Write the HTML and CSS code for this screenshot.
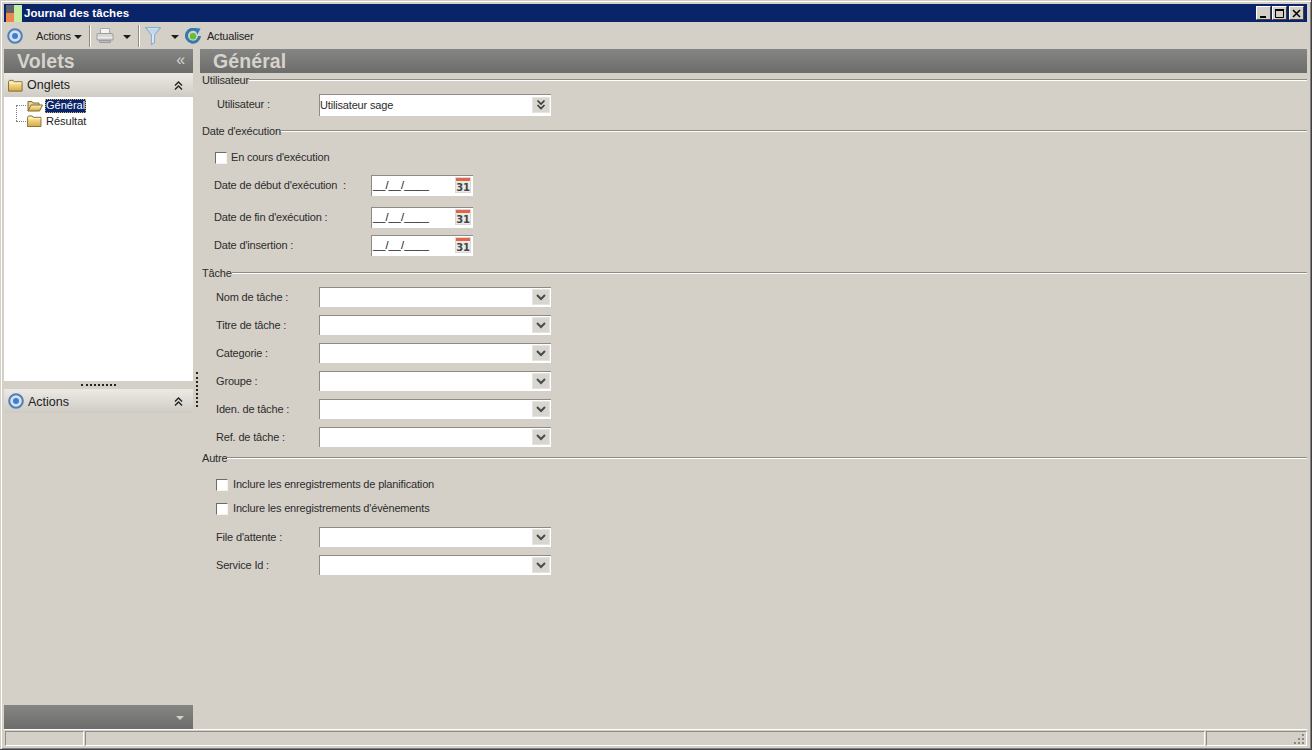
FILE: index.html
```html
<!DOCTYPE html>
<html lang="fr">
<head>
<meta charset="utf-8">
<title>Journal des tâches</title>
<link rel="stylesheet" href="styles.css">
</head>
<body>
<svg class="defs" width="0" height="0" aria-hidden="true">
  <defs>
    <linearGradient id="fold" x1="0" y1="0" x2="0" y2="1"><stop offset="0" stop-color="#fff3b8"/><stop offset="1" stop-color="#d9a83c"/></linearGradient>
    <symbol id="folder" viewBox="0 0 16 13">
      <path d="M.5 2.500 1.500 1h4l1 1.500h8.500v10H.5z" fill="url(#fold)" stroke="#7d6a38"/>
      <path d="M1.500 4h13" stroke="#fff6c8"/>
    </symbol>
    <symbol id="folder-open" viewBox="0 0 16 12">
      <path d="M1 11V1.500h4l1 1.500h6v2" fill="#e8d590" stroke="#7d6a38"/>
      <path d="M1 11 4 5h11.500l-3 6z" fill="url(#fold)" stroke="#7d6a38"/>
    </symbol>
    <symbol id="target" viewBox="0 0 16 16">
      <circle cx="8" cy="8" r="6.800" fill="#d5e0ee" stroke="#4f7fb8" stroke-width="2"/>
      <circle cx="8" cy="8" r="3" fill="#3f7fd0"/>
    </symbol>
    <symbol id="cal" viewBox="0 0 16 16">
      <rect width="16" height="16" fill="#d9d8d4"/>
      <rect x="1" y="1" width="14" height="3" fill="#e2654a"/>
      <rect x="1" y="4" width="14" height="11" fill="#ece9e2"/>
      <text x="8" y="13.500" text-anchor="middle" class="cal-num">31</text>
    </symbol>
    <symbol id="chev" viewBox="0 0 18 16">
      <rect width="18" height="16" fill="#d8d6d0"/>
      <rect x=".5" y=".5" width="17" height="15" fill="none" stroke="#e6e4df"/>
      <path d="M5 6l4 4 4-4" fill="none" stroke="#4a4a4a" stroke-width="2"/>
    </symbol>
    <symbol id="chev2" viewBox="0 0 18 16">
      <rect width="18" height="16" fill="#d8d6d0"/>
      <rect x=".5" y=".5" width="17" height="15" fill="none" stroke="#e6e4df"/>
      <path d="M5.500 3.500l3.500 3.500 3.500-3.500M5.500 8l3.500 3.500L12.500 8" fill="none" stroke="#3a3a3a" stroke-width="1.600"/>
    </symbol>
    <symbol id="up2" viewBox="0 0 9 9">
      <path d="M1 4.500 4.500 1 8 4.500M1 8.500 4.500 5 8 8.500" fill="none" stroke="#222" stroke-width="1.400"/>
    </symbol>
  </defs>
</svg>

<div class="window">
  <header class="titlebar">
    <svg class="app-icon" width="16" height="17" viewBox="0 0 16 17">
      <rect width="8" height="8" fill="#5d636b"/>
      <rect y="8" width="8" height="9" fill="#f0864c"/>
      <rect x="8" width="8" height="17" fill="#c6eea2"/>
    </svg>
    <span class="title-text">Journal des tâches</span>
    <div class="win-btns">
      <button class="win-btn"><svg width="9" height="9" viewBox="0 0 9 9"><rect x="1" y="7" width="6" height="2" fill="#000"/></svg></button>
      <button class="win-btn"><svg width="9" height="9" viewBox="0 0 9 9"><path d="M.5 1.500h8v7h-8z" fill="none" stroke="#000"/><path d="M0 1h9" stroke="#000" stroke-width="2"/></svg></button>
      <button class="win-btn win-close"><svg width="9" height="9" viewBox="0 0 9 9"><path d="M1 1l7 7M8 1 1 8" stroke="#000" stroke-width="1.600"/></svg></button>
    </div>
  </header>

  <nav class="toolbar">
    <svg class="tb-target" width="16" height="16"><use href="#target"/></svg>
    <span class="tb-actions">Actions</span>
    <i class="caret caret-actions"></i>
    <i class="tb-sep"></i>
    <svg class="tb-printer" width="18" height="17" viewBox="0 0 18 17">
      <path d="M4.500 1.500h9v5h-9z" fill="#f4f4f2" stroke="#a8a8a8"/>
      <path d="M1 7.500q0-1 1-1h14q1 0 1 1v5.500H1z" fill="#d8d8d6" stroke="#9c9c9c"/>
      <path d="M1.500 10.500h15" stroke="#efefed"/>
      <path d="M3.500 13.500h11v2h-11z" fill="#bcbcba" stroke="#9c9c9c"/>
    </svg>
    <i class="caret caret-print"></i>
    <i class="tb-sep tb-sep2"></i>
    <svg class="tb-filter" width="16" height="18" viewBox="0 0 16 18">
      <path d="M.7.700h14.600L9.500 8v7.500l-3 2V8z" fill="#e6eef4" stroke="#86b0d2" stroke-width="1.200"/>
      <path d="M3 2h10L8.500 7.500h-1z" fill="#c4d8e8"/>
    </svg>
    <i class="caret caret-filter"></i>
    <svg class="tb-refresh" width="16" height="16" viewBox="0 0 16 16">
      <path d="M11.500 2.200A6.500 6.500 0 1 0 14.500 8" fill="none" stroke="#3a78a8" stroke-width="3"/>
      <path d="M9 0 15.500 .5 12.500 6.500z" fill="#2f7fc0"/>
      <circle cx="8" cy="8.200" r="3.200" fill="#5fc03c"/>
    </svg>
    <span class="tb-refresh-label">Actualiser</span>
  </nav>

  <div class="main">
    <aside class="sidebar">
      <div class="dark-head">
        <span class="dark-title">Volets</span>
        <span class="collapse">«</span>
      </div>
      <div class="pane-head">
        <svg class="pane-folder" width="15" height="13"><use href="#folder"/></svg>
        <span class="pane-label">Onglets</span>
        <svg class="pane-up" width="9" height="9"><use href="#up2"/></svg>
      </div>
      <ul class="tree">
        <li class="tree-item tree-first">
          <svg class="tree-icon" width="16" height="12"><use href="#folder-open"/></svg>
          <span class="tree-sel">Général</span>
        </li>
        <li class="tree-item tree-second">
          <svg class="tree-icon tree-icon-closed" width="15" height="12"><use href="#folder"/></svg>
          <span class="tree-text">Résultat</span>
        </li>
      </ul>
      <div class="grip"><i class="grip-dots"></i></div>
      <div class="pane-head">
        <svg class="pane-target" width="16" height="16"><use href="#target"/></svg>
        <span class="pane-label pane-label-low">Actions</span>
        <svg class="pane-up" width="9" height="9"><use href="#up2"/></svg>
      </div>
      <div class="side-fill"></div>
      <div class="dark-foot"><i class="foot-arrow"></i></div>
    </aside>

    <div class="splitter"><i class="split-dots"></i></div>

    <main class="content">
      <div class="dark-head dark-head-main"><span class="dark-title">Général</span></div>
      <form class="form">
        <div class="group-title"><span>Utilisateur</span><i class="rule"></i></div>
        <div class="row row-user">
          <label class="lbl lbl-user">Utilisateur :</label>
          <div class="combo combo-tall"><span class="combo-value">Utilisateur sage</span><svg class="combo-btn" width="18" height="16"><use href="#chev2"/></svg></div>
        </div>

        <div class="group-title gt-date"><span>Date d'exécution</span><i class="rule"></i></div>
        <div class="check-row cr-run"><input type="checkbox" class="check"><span>En cours d'exécution</span></div>
        <div class="row row-date rd-start">
          <label class="lbl lbl-date">Date de début d'exécution&nbsp; :</label>
          <div class="date"><span class="mask">__/__/____</span><svg class="cal" width="16" height="16"><use href="#cal"/></svg></div>
        </div>
        <div class="row row-date rd-end">
          <label class="lbl lbl-date">Date de fin d'exécution :</label>
          <div class="date"><span class="mask">__/__/____</span><svg class="cal" width="16" height="16"><use href="#cal"/></svg></div>
        </div>
        <div class="row row-date rd-ins">
          <label class="lbl lbl-date">Date d'insertion :</label>
          <div class="date"><span class="mask">__/__/____</span><svg class="cal" width="16" height="16"><use href="#cal"/></svg></div>
        </div>

        <div class="group-title gt-task"><span>Tâche</span><i class="rule"></i></div>
        <div class="rows rows-task">
          <div class="row"><label class="lbl">Nom de tâche :</label><div class="combo"><svg class="combo-btn" width="18" height="16"><use href="#chev"/></svg></div></div>
          <div class="row"><label class="lbl">Titre de tâche :</label><div class="combo"><svg class="combo-btn" width="18" height="16"><use href="#chev"/></svg></div></div>
          <div class="row"><label class="lbl">Categorie :</label><div class="combo"><svg class="combo-btn" width="18" height="16"><use href="#chev"/></svg></div></div>
          <div class="row"><label class="lbl">Groupe :</label><div class="combo"><svg class="combo-btn" width="18" height="16"><use href="#chev"/></svg></div></div>
          <div class="row"><label class="lbl">Iden. de tâche :</label><div class="combo"><svg class="combo-btn" width="18" height="16"><use href="#chev"/></svg></div></div>
          <div class="row"><label class="lbl">Ref. de tâche :</label><div class="combo"><svg class="combo-btn" width="18" height="16"><use href="#chev"/></svg></div></div>
        </div>

        <div class="group-title gt-other"><span>Autre</span><i class="rule"></i></div>
        <div class="check-row cr-plan"><input type="checkbox" class="check"><span>Inclure les enregistrements de planification</span></div>
        <div class="check-row cr-evt"><input type="checkbox" class="check"><span>Inclure les enregistrements d'évènements</span></div>
        <div class="rows rows-other">
          <div class="row"><label class="lbl">File d'attente :</label><div class="combo"><svg class="combo-btn" width="18" height="16"><use href="#chev"/></svg></div></div>
          <div class="row"><label class="lbl">Service Id :</label><div class="combo"><svg class="combo-btn" width="18" height="16"><use href="#chev"/></svg></div></div>
        </div>
      </form>
    </main>
  </div>

  <footer class="statusbar">
    <div class="status-cell s1"></div>
    <div class="status-cell s2"></div>
    <div class="status-cell s3"><svg class="sizer" width="12" height="12" viewBox="0 0 12 12"><path d="M9 1h2v2H9zM9 5h2v2H9zM5 5h2v2H5zM9 9h2v2H9zM5 9h2v2H5zM1 9h2v2H1z" fill="#8a8780"/></svg></div>
  </footer>
</div>
</body>
</html>
```
FILE: styles.css
```css
* { box-sizing: border-box; }
html, body { margin: 0; height: 100%; }
body {
  background: #d4d0c8;
  font-family: "Liberation Sans", Arial, sans-serif;
  font-size: 11px;
  letter-spacing: -.17px;
  color: #222;
  overflow: hidden;
}
.defs { position: absolute; }
.cal-num { font: bold 10px "DejaVu Sans", sans-serif; fill: #3c4650; letter-spacing: -.3px; }

.window {
  width: 1312px;
  height: 750px;
  display: flex;
  flex-direction: column;
  padding: 4px 4px 3px 4px;
  background: #d4d0c8;
  border-right: 1px solid #404040;
  border-bottom: 1px solid #404040;
  box-shadow: inset 1px 1px 0 #d4d0c8, inset 2px 2px 0 #fff, inset -1px -1px 0 #808080;
}

/* title bar */
.titlebar {
  height: 18px;
  flex: none;
  background: #0a246a;
  display: flex;
  align-items: center;
  color: #fff;
  padding-left: 2px;
}
.app-icon { flex: none; margin-top: 1px; }
.title-text { font-weight: bold; font-size: 11.500px; margin-left: 2px; letter-spacing: .05px; }
.win-btns { margin-left: auto; margin-right: 3px; display: flex; }
.win-btn {
  width: 15px;
  height: 14px;
  padding: 0;
  margin-left: 1px;
  background: #d4d0c8;
  border: 1px solid;
  border-color: #fff #404040 #404040 #fff;
  display: flex;
  align-items: center;
  justify-content: center;
}
.win-close { margin-left: 2px; }

/* toolbar */
.toolbar {
  height: 27px;
  flex: none;
  display: flex;
  align-items: center;
}
.tb-target { margin-left: 3px; flex: none; }
.tb-actions { margin-left: 13px; }
.caret {
  flex: none;
  width: 0;
  height: 0;
  border-left: 4px solid transparent;
  border-right: 4px solid transparent;
  border-top: 4px solid #1c1c1c;
  margin-top: 2px;
}
.caret-actions { margin-left: 3px; }
.tb-sep {
  flex: none;
  width: 2px;
  height: 22px;
  border-left: 1px solid #8f8c85;
  border-right: 1px solid #fff;
  margin-left: 7px;
}
.tb-printer { margin-left: 5px; flex: none; }
.caret-print { margin-left: 9px; }
.tb-sep2 { margin-left: 7px; }
.tb-filter { margin-left: 5px; flex: none; }
.caret-filter { margin-left: 10px; }
.tb-refresh { margin-left: 6px; flex: none; }
.tb-refresh-label { margin-left: 6px; }

/* layout */
.main { flex: 1; min-height: 0; display: flex; }
.sidebar { width: 189px; flex: none; display: flex; flex-direction: column; }
.splitter { width: 7px; flex: none; position: relative; }
.split-dots {
  position: absolute;
  left: 3px;
  top: 323px;
  height: 35px;
  width: 2px;
  border-left: 2px dotted #222;
}
.content { flex: 1; min-width: 0; display: flex; flex-direction: column; }

/* headers */
.dark-head {
  height: 24px;
  flex: none;
  background: linear-gradient(#858583, #6c6c6a);
  display: flex;
  align-items: center;
  padding-left: 13px;
  color: #d6d3cd;
}
.dark-title { font-weight: bold; font-size: 19.500px; letter-spacing: .1px; }
.collapse { margin-left: auto; margin-right: 8px; font-size: 16px; line-height: 16px; margin-top: -2px; }
.pane-head {
  height: 24px;
  flex: none;
  background: linear-gradient(#edeae5, #cfcbc4);
  display: flex;
  align-items: center;
  font-size: 12.500px;
  letter-spacing: 0;
}
.pane-folder { margin-left: 4px; flex: none; }
.pane-target { margin-left: 4px; flex: none; }
.pane-label { margin-left: 4px; }
.pane-label-low { padding-top: 2px; }
.pane-up { margin-left: auto; margin-right: 10px; flex: none; }

/* tree */
.tree {
  list-style: none;
  margin: 0;
  padding: 0 0 0 23px;
  height: 284px;
  flex: none;
  background: #fff;
}
.tree-item { position: relative; display: flex; align-items: center; height: 16px; letter-spacing: 0; }
.tree-first { height: 16px; padding-top: 1px; }
.tree-item::before {
  content: "";
  position: absolute;
  left: -11px;
  top: 8px;
  width: 10px;
  border-top: 1px dotted #808080;
}
.tree-second::after {
  content: "";
  position: absolute;
  left: -11px;
  top: -8px;
  height: 16px;
  border-left: 1px dotted #808080;
}
.tree-icon { flex: none; }
.tree-sel {
  background: #0a246a;
  color: #fff;
  margin-left: 2px;
  padding: 0 1px;
  height: 14px;
  line-height: 13px;
  outline: 1px dotted #c8b070;
  outline-offset: -1px;
}
.tree-text { margin-left: 4px; }
.tree-icon-closed { margin-left: 0; }

.grip { height: 8px; flex: none; display: flex; justify-content: center; align-items: center; padding-right: 1px; }
.grip-dots { width: 35px; height: 2px; border-top: 2px dotted #222; }
.side-fill { flex: 1; }
.dark-foot {
  height: 24px;
  flex: none;
  background: linear-gradient(#858583, #6c6c6a);
  display: flex;
  align-items: center;
  justify-content: flex-end;
  padding-right: 9px;
}
.foot-arrow {
  width: 0;
  height: 0;
  border-left: 4px solid transparent;
  border-right: 4px solid transparent;
  border-top: 4px solid #d4d0c8;
  margin-top: 2px;
}

/* form */
.form { padding-left: 2px; display: flex; flex-direction: column; color: #2c2c2c; }
.group-title { height: 14px; display: flex; align-items: center; line-height: 14px; flex: none; }
.group-title > span { flex: none; }
.rule { flex: 1; height: 2px; border-top: 1px solid #8f8c85; border-bottom: 1px solid #fff; margin-top: -1px; }
.gt-date { margin-top: 8px; }
.gt-task { margin-top: 10px; }
.gt-other { margin-top: 4px; }

.row { display: flex; align-items: center; padding-left: 14px; }
.lbl { width: 103px; flex: none; }
.row-user { margin-top: 7px; padding-left: 15px; }
.lbl-user { width: 102px; padding-bottom: 2px; }
.row-date { padding-left: 12px; }
.lbl-date { width: 157px; padding-bottom: 2px; }
.rd-start { margin-top: 11px; }
.rd-end { margin-top: 11px; }
.rd-ins { margin-top: 7px; }

.rows { display: flex; flex-direction: column; gap: 8px; }
.rows-task { margin-top: 7px; }
.rows-other { margin-top: 12px; }

.combo {
  width: 232px;
  height: 20px;
  background: #fff;
  border-top: 1px solid #8f8c85;
  border-left: 1px solid #8f8c85;
  display: flex;
  align-items: center;
  padding-right: 1px;
  flex: none;
}
.combo-tall { height: 22px; }
.combo-value { padding-bottom: 2px; }
.combo-btn { margin-left: auto; flex: none; margin-top: -1px; }

.date {
  width: 102px;
  height: 21px;
  background: #fff;
  border-top: 1px solid #8f8c85;
  border-left: 1px solid #8f8c85;
  display: flex;
  align-items: center;
  padding-right: 2px;
  flex: none;
}
.mask { padding: 0 0 2px 1px; letter-spacing: .1px; color: #111; }
.cal { margin-left: auto; flex: none; margin-top: -2px; }

.check-row { display: flex; align-items: center; height: 14px; }
.check {
  appearance: none;
  -webkit-appearance: none;
  width: 12px;
  height: 12px;
  margin: 2px 0 0;
  background: #fff;
  border: 1px solid;
  border-color: #6e6c66 #f4f3f0 #f4f3f0 #6e6c66;
  flex: none;
}
.cr-run { margin-top: 12px; padding-left: 13px; }
.cr-run .check { margin-right: 4px; }
.cr-plan { margin-top: 12px; padding-left: 14px; }
.cr-evt { margin-top: 10px; padding-left: 14px; }
.cr-plan .check, .cr-evt .check { margin-right: 5px; }

/* status bar */
.statusbar {
  height: 17px;
  flex: none;
  display: flex;
  gap: 1px;
  padding: 1px 0 0 1px;
  border-top: 1px solid #fff;
}
.status-cell {
  border-top: 1px solid #8f8c85;
  border-left: 1px solid #8f8c85;
  border-right: 1px solid #fff;
  border-bottom: 1px solid #fff;
  height: 15px;
  position: relative;
}
.s1 { width: 79px; flex: none; }
.s2 { flex: 1; }
.s3 { width: 101px; flex: none; display: flex; justify-content: flex-end; align-items: flex-end; }
.sizer { flex: none; margin-right: 1px; }
```
